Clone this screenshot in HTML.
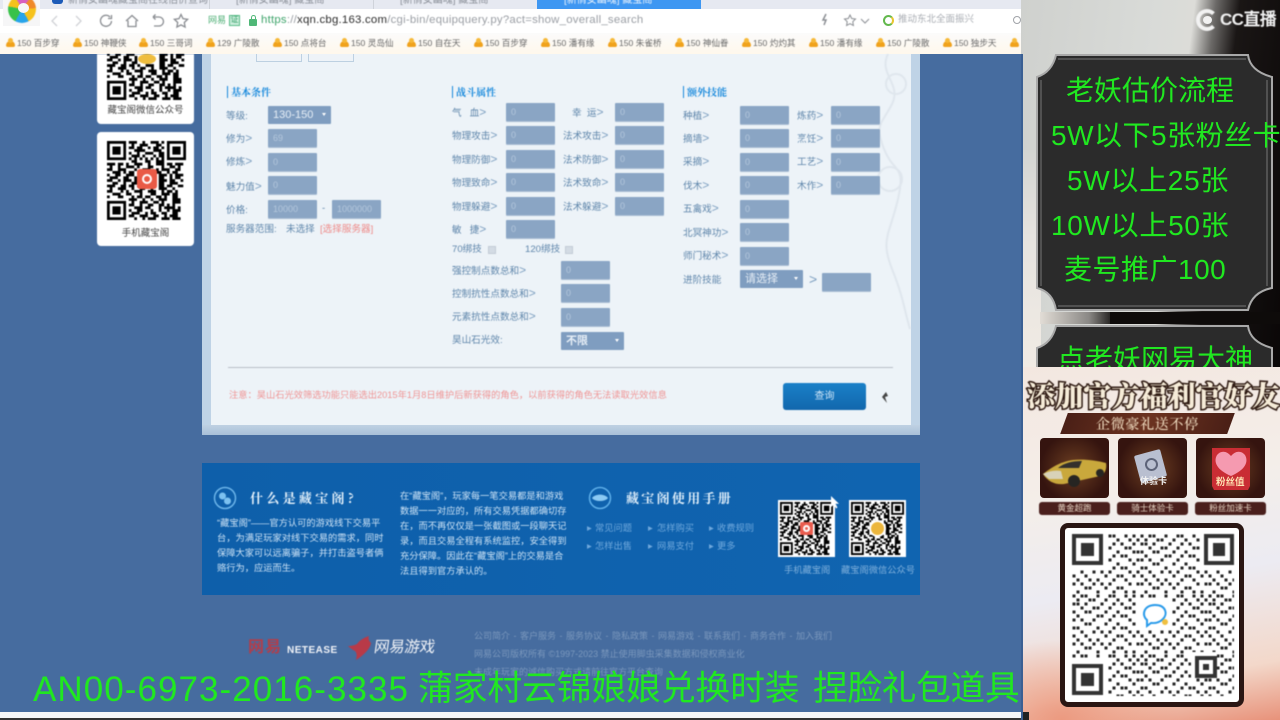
<!DOCTYPE html>
<html lang="zh"><head><meta charset="utf-8"><title>藏宝阁</title>
<style>
*{box-sizing:border-box;margin:0;padding:0}
html,body{width:1280px;height:720px;overflow:hidden;background:#466c9f;font-family:"Liberation Sans","Noto Sans CJK SC",sans-serif}
#stage{position:absolute;left:0;top:0;width:1280px;height:720px;overflow:hidden}
.t{position:absolute;white-space:nowrap;line-height:1}
.soft{filter:blur(.5px)}
.i{position:absolute;width:49px;height:18px;background:#8aa5c4;border-radius:1px;color:#b4c7dc;font-size:9px;line-height:18px;padding-left:5px;box-shadow:0 1px 0 #a9bdd3}
.s{position:absolute;width:63px;height:18px;background:#7f9dc0;border-radius:1px;color:#e6eef6;font-size:11px;line-height:18px;padding-left:5px}
.s:after{content:"";position:absolute;right:5px;top:7px;border:2.5px solid transparent;border-top:3px solid #fff}
.l{position:absolute;white-space:nowrap;font-size:9.6px;line-height:12px;color:#5f86ab}
.l b{font-weight:400;color:#7d9fc0;font-size:12px}
.h{position:absolute;white-space:nowrap;font:bold 10px/12px "Noto Serif CJK SC",serif;color:#1a8adc;border-left:1.5px solid #1a8adc;padding-left:3px}
.bm{position:absolute;top:38px;font-size:8.6px;line-height:11px;color:#6a6a6a;white-space:nowrap;padding-left:14px}
.bm:before{content:"";position:absolute;left:3px;top:3px;width:9px;height:6px;border-radius:5px 5px 2px 2px;background:#f0a21c}
.bm:after{content:"";position:absolute;left:5px;top:0;width:5px;height:5px;border-radius:50%;background:#f6b93a}
.f{position:absolute;white-space:nowrap;font-size:9.25px;line-height:18px;color:#cde3f6}
.m{position:absolute;white-space:nowrap;font-size:9.25px;line-height:11px;color:#6fa8dc}
.g{position:absolute;white-space:nowrap;color:#20e820;font-family:"Liberation Sans","Noto Sans CJK SC",sans-serif;line-height:1}
.card{position:absolute;top:438px;width:69px;height:60px;border-radius:4px;background:radial-gradient(circle at 50% 50%,#6d3f22,#35140f 75%)}
.cl{position:absolute;top:502px;width:71px;height:13px;border-radius:3px;background:#4a1f1c;color:#e6d3c2;font-size:8.5px;line-height:13px;text-align:center}
</style></head><body>
<div id="stage">
<svg width="0" height="0" style="position:absolute"><defs>
<symbol id="qr" viewBox="0 0 29 29">
<path fill-rule="evenodd" d="M0 0h7v7H0zM1 1v5h5V1zM2 2h3v3H2zM22 0h7v7h-7zM23 1v5h5V1zM24 2h3v3h-3zM0 22h7v7H0zM1 23v5h5v-5zM2 24h3v3H2z"/>
<path stroke="#000" fill="none" d="M8 .5h3m2 0h1m2 0h3m1 0h1M9 1.5h1m2 0h3m3 0h2M8 2.5h2m1 0h2m2 0h1m1 0h2m1 0h1M10 3.5h4m3 0h3M8 4.5h1m2 0h1m2 0h3m2 0h2M9 5.5h3m1 0h1m3 0h1m1 0h2M8 6.5h1m1 0h1m1 0h1m1 0h1m1 0h1m1 0h1m1 0h1M9 7.5h2m3 0h2m2 0h3M0 8.5h3m1 0h2m1 0h1m2 0h3m2 0h1m2 0h3m1 0h2m1 0h3M1 9.5h1m2 0h1m2 0h3m1 0h1m3 0h2m3 0h1m2 0h2m1 0h1M0 10.5h2m2 0h3m3 0h1m2 0h3m2 0h1m1 0h3m2 0h2M2 11.5h3m1 0h1m1 0h2m2 0h1m3 0h1m1 0h2m2 0h1m1 0h2M0 12.5h1m2 0h2m2 0h3m9 0h3m1 0h1m1 0h3M1 13.5h3m2 0h2m2 0h1m8 0h2m2 0h1m1 0h2M0 14.5h2m2 0h1m1 0h3m1 0h1m8 0h3m1 0h2m2 0h1M2 15.5h2m2 0h1m2 0h2m8 0h2m2 0h3M0 16.5h3m2 0h2m1 0h2m1 0h1m2 0h3m2 0h2m1 0h2m2 0h2M1 17.5h1m2 0h3m2 0h1m2 0h2m2 0h1m2 0h3m2 0h1M0 18.5h2m3 0h1m1 0h1m2 0h3m2 0h3m2 0h1m1 0h2m1 0h1M2 19.5h3m2 0h2m3 0h1m3 0h2m2 0h3m1 0h2M0 20.5h1m3 0h2m3 0h1m1 0h2m1 0h2m2 0h2m1 0h1m2 0h2M8 21.5h3m2 0h1m2 0h1m2 0h3m2 0h3M9 22.5h1m2 0h3m2 0h2m1 0h1m3 0h3M8 23.5h2m2 0h1m2 0h2m2 0h2m1 0h1m1 0h1M10 24.5h3m1 0h2m3 0h1m1 0h4m1 0h1M8 25.5h1m2 0h2m3 0h1m2 0h1m2 0h1m1 0h3M9 26.5h3m2 0h1m1 0h2m2 0h2m2 0h2M8 27.5h2m2 0h3m2 0h2m2 0h1m1 0h3M10 28.5h1m2 0h1m1 0h3m2 0h3m1 0h3"/>
</symbol>
<pattern id="dots" width="68" height="60" patternUnits="userSpaceOnUse">
<path fill="#262626" stroke="#fff" stroke-width="1" d="M0 0h4v4H0zM8 0h4v4H8zM12 0h4v4h-4zM24 0h4v4h-4zM36 0h4v4h-4zM40 0h4v4h-4zM52 0h4v4h-4zM60 0h4v4h-4zM4 4h4v4H4zM16 4h4v4h-4zM20 4h4v4h-4zM32 4h4v4h-4zM44 4h4v4h-4zM56 4h4v4h-4zM64 4h4v4h-4zM0 8h4v4H0zM4 8h4v4H4zM12 8h4v4h-4zM28 8h4v4h-4zM40 8h4v4h-4zM48 8h4v4h-4zM60 8h4v4h-4zM8 12h4v4H8zM20 12h4v4h-4zM24 12h4v4h-4zM36 12h4v4h-4zM52 12h4v4h-4zM56 12h4v4h-4zM0 16h4v4H0zM12 16h4v4h-4zM16 16h4v4h-4zM32 16h4v4h-4zM44 16h4v4h-4zM60 16h4v4h-4zM64 16h4v4h-4zM4 20h4v4H4zM24 20h4v4h-4zM28 20h4v4h-4zM40 20h4v4h-4zM48 20h4v4h-4zM52 20h4v4h-4zM0 24h4v4H0zM8 24h4v4H8zM20 24h4v4h-4zM36 24h4v4h-4zM56 24h4v4h-4zM64 24h4v4h-4zM12 28h4v4h-4zM16 28h4v4h-4zM32 28h4v4h-4zM44 28h4v4h-4zM60 28h4v4h-4zM0 32h4v4H0zM4 32h4v4H4zM24 32h4v4h-4zM40 32h4v4h-4zM48 32h4v4h-4zM52 32h4v4h-4zM8 36h4v4H8zM20 36h4v4h-4zM28 36h4v4h-4zM36 36h4v4h-4zM56 36h4v4h-4zM64 36h4v4h-4zM0 40h4v4H0zM12 40h4v4h-4zM32 40h4v4h-4zM44 40h4v4h-4zM48 40h4v4h-4zM60 40h4v4h-4zM4 44h4v4H4zM16 44h4v4h-4zM24 44h4v4h-4zM40 44h4v4h-4zM52 44h4v4h-4zM0 48h4v4H0zM8 48h4v4H8zM20 48h4v4h-4zM28 48h4v4h-4zM36 48h4v4h-4zM56 48h4v4h-4zM64 48h4v4h-4zM12 52h4v4h-4zM16 52h4v4h-4zM32 52h4v4h-4zM44 52h4v4h-4zM48 52h4v4h-4zM4 56h4v4H4zM24 56h4v4h-4zM40 56h4v4h-4zM52 56h4v4h-4zM60 56h4v4h-4z"/>
</pattern>
</defs></svg>

<!-- Browser chrome -->
<div style="position:absolute;left:0;top:0;width:1021px;height:9px;background:#e6e9f1"></div>
<div style="position:absolute;left:537px;top:0;width:164px;height:9px;background:#3e97f2"></div>
<div style="position:absolute;left:209px;top:0;width:1px;height:9px;background:#cfd3da"></div>
<div style="position:absolute;left:373px;top:0;width:1px;height:9px;background:#cfd3da"></div>
<div class="t soft" style="left:68px;top:-4px;font-size:10px;color:#8a8f98">新倩女幽魂藏宝阁在线估价查询</div>
<div class="t soft" style="left:236px;top:-4px;font-size:10px;color:#8a8f98">[新倩女幽魂] 藏宝阁</div>
<div class="t soft" style="left:400px;top:-4px;font-size:10px;color:#8a8f98">[新倩女幽魂] 藏宝阁</div>
<div class="t soft" style="left:564px;top:-4px;font-size:10px;color:#e8f2fd">[新倩女幽魂] 藏宝阁</div>
<div style="position:absolute;left:52px;top:0;width:11px;height:4px;background:#1c5bb8;border-radius:0 0 3px 3px"></div>
<div style="position:absolute;left:0;top:9px;width:1021px;height:24px;background:#fff"></div>
<div style="position:absolute;left:0;top:33px;width:1021px;height:21px;background:linear-gradient(#fbfbfb,#fff8ec)"></div>
<div style="position:absolute;left:3px;top:0;width:37px;height:26px;background:#f6f6f7"></div>
<div class="soft" style="position:absolute;left:8px;top:-5px;width:28px;height:28px;border-radius:50%;background:conic-gradient(#d85fc0 0 10%,#f08a2a 10% 24%,#f6c21c 24% 42%,#27a4ea 42% 58%,#38c24a 58% 78%,#f6c21c 78% 92%,#d85fc0 92%)"></div>
<div style="position:absolute;left:18px;top:3px;width:11px;height:10px;border-radius:50%;background:#f6f6f8"></div>

<svg class="soft" style="position:absolute;left:48px;top:11px" width="150" height="20" fill="none" stroke="#8a8d92" stroke-width="1.3">
<path d="M9 5l-5 5 5 5M28 5l5 5-5 5" stroke="#d0d2d6"/>
<path d="M62 6a5.5 5.5 0 1 0 1.500 4M63.500 4v3.500h-3.500"/>
<path d="M78 10l6-5.500 6 5.500M80 9.500v6h8v-6"/>
<path d="M105 6h6a4 4 0 0 1 0 9h-5M105 6l2.500-2.500M105 6l2.500 2.500"/>
<path d="M133 3.500l2 4.200 4.600.6-3.300 3.200.8 4.600-4.100-2.200-4.100 2.200.8-4.600-3.300-3.200 4.600-.6z"/>
</svg>
<div class="t soft" style="left:208px;top:16px;font-size:9px;color:#4cae74">网易</div>
<div class="t soft" style="left:229px;top:15px;width:11px;height:11px;background:#cdeedd;border:1px solid #58bb86;font-size:8px;color:#3aa36c;text-align:center">证</div>
<div style="position:absolute;left:249px;top:19px;width:8px;height:7px;background:#4fb777;border-radius:1px"></div>
<div style="position:absolute;left:250.500px;top:15px;width:5px;height:6px;border:1px solid #4fb777;border-bottom:0;border-radius:3px 3px 0 0"></div>
<div class="t soft" style="left:261px;top:15px;font-size:11.400px;letter-spacing:.02em;color:#9a9ea4;white-space:nowrap"><span style="color:#3fa46b">https</span>://<span style="color:#2c2c2c">xqn.cbg.163.com</span>/cgi-bin/equipquery.py?act=show_overall_search</div>
<svg class="soft" style="position:absolute;left:815px;top:12px" width="60" height="16" fill="none" stroke="#8c8f94"><path d="M11 2l-3 6h3l-2 5" stroke-width="1.500"/><path d="M35 3l1.700 3.500 3.800.5-2.700 2.700.6 3.800-3.400-1.800-3.400 1.800.6-3.800L29.500 7l3.800-.5z"/><path d="M46 7l4 4 4-4"/></svg>
<div style="position:absolute;left:883px;top:15px;width:11px;height:11px;border-radius:50%;border:2px solid #62b84c;border-right-color:#e8c62e"></div>
<div class="t soft" style="left:898px;top:15px;font-size:9.500px;color:#a9adb3">推动东北全面振兴</div>
<div style="position:absolute;left:1013px;top:16px;width:8px;height:8px;border-radius:50%;border:1px solid #a0a3a8"></div>

<div class="soft">
<span class="bm" style="left:3px">150 百步穿</span><span class="bm" style="left:70px">150 神鞭侠</span><span class="bm" style="left:136px">150 三哥词</span><span class="bm" style="left:203px">129 广陵散</span><span class="bm" style="left:270px">150 点将台</span><span class="bm" style="left:337px">150 灵岛仙</span><span class="bm" style="left:404px">150 自在天</span><span class="bm" style="left:471px">150 百步穿</span><span class="bm" style="left:538px">150 潘有缘</span><span class="bm" style="left:605px">150 朱雀桥</span><span class="bm" style="left:672px">150 神仙眷</span><span class="bm" style="left:739px">150 灼灼其</span><span class="bm" style="left:806px">150 潘有缘</span><span class="bm" style="left:873px">150 广陵散</span><span class="bm" style="left:940px">150 独步天</span><span class="bm" style="left:1007px;width:14px;overflow:hidden">1</span>
</div>

<!-- page -->
<div style="position:absolute;left:0;top:54px;width:1021px;height:658px;background:#466c9f"></div>
<div style="position:absolute;left:0;top:712px;width:1021px;height:6px;background:#f6f7f8"></div>
<div style="position:absolute;left:0;top:718px;width:1021px;height:2px;background:#333"></div>

<!-- left QR cards -->
<div style="position:absolute;left:97px;top:54px;width:97px;height:70px;background:#fff;border-radius:0 0 4px 4px;overflow:hidden" class="soft">
<svg style="position:absolute;left:10px;top:-34px" width="80" height="80"><use href="#qr"/></svg>
<div style="position:absolute;left:41px;top:0;width:18px;height:10px;border-radius:50%;background:#efbd3e"></div>
<div class="t" style="left:0;width:97px;text-align:center;top:52px;font-size:9.500px;color:#444">藏宝阁微信公众号</div>
</div>
<div style="position:absolute;left:97px;top:132px;width:97px;height:114px;background:#fff;border-radius:4px" class="soft">
<svg style="position:absolute;left:10px;top:9px" width="79" height="79"><use href="#qr"/></svg>
<div style="position:absolute;left:40px;top:37px;width:20px;height:20px;border-radius:3px;background:#e95a46"></div>
<div style="position:absolute;left:45px;top:42px;width:10px;height:10px;border-radius:50%;border:2.500px solid #fff"></div>
<div class="t" style="left:0;width:97px;text-align:center;top:97px;font-size:9.500px;color:#444">手机藏宝阁</div>
</div>

<!-- form panel -->
<div style="position:absolute;left:202px;top:54px;width:718px;height:381px;background:#bfd3e6"></div>
<div style="position:absolute;left:202px;top:425px;width:718px;height:10px;background:linear-gradient(#bfd1e3,#a8c0d8)"></div>
<div style="position:absolute;left:211px;top:54px;width:700px;height:371px;background:#edf3f8"></div>
<svg class="soft" style="position:absolute;left:860px;top:54px" width="51" height="290" fill="none" stroke="#dfe6ed" stroke-width="2"><path d="M28 0c-10 20 14 30 4 50s-18 20-8 45 22 15 14 50-18 40-6 70 12 40 18 60"/><circle cx="36" cy="30" r="10"/><circle cx="30" cy="125" r="12"/></svg>
<div style="position:absolute;left:256px;top:54px;width:46px;height:8px;border:1px solid #bdd0e1;border-top:0;background:#eef3f8"></div>
<div style="position:absolute;left:308px;top:54px;width:46px;height:8px;border:1px solid #bdd0e1;border-top:0;background:#eef3f8"></div>

<div class="soft">
<div class="h" style="left:227px;top:86px">基本条件</div>
<div class="h" style="left:452px;top:86px">战斗属性</div>
<div class="h" style="left:683px;top:86px">额外技能</div>

<div class="l" style="left:226px;top:111px">等级:</div><div class="s" style="left:268px;top:106px">130-150</div>
<div class="l" style="left:226px;top:132px">修为<b>&gt;</b></div><div class="i" style="left:268px;top:129px">69</div>
<div class="l" style="left:226px;top:155px">修炼<b>&gt;</b></div><div class="i" style="left:268px;top:153px">0</div>
<div class="l" style="left:226px;top:180px">魅力值<b>&gt;</b></div><div class="i" style="left:268px;top:176px">0</div>
<div class="l" style="left:226px;top:205px">价格:</div><div class="i" style="left:268px;top:200px">10000</div>
<div class="l" style="left:322px;top:203px">-</div><div class="i" style="left:332px;top:200px">1000000</div>
<div class="l" style="left:226px;top:224px">服务器范围:</div><div class="l" style="left:286px;top:224px">未选择</div><div class="l" style="left:320px;top:224px;color:#ee8a88">[选择服务器]</div>

<div class="l" style="left:452px;top:106px">气&nbsp;&nbsp;&nbsp;血<b>&gt;</b></div><div class="i" style="left:506px;top:103px">0</div>
<div class="l" style="left:452px;top:129px">物理攻击<b>&gt;</b></div><div class="i" style="left:506px;top:126px">0</div>
<div class="l" style="left:452px;top:153px">物理防御<b>&gt;</b></div><div class="i" style="left:506px;top:150px">0</div>
<div class="l" style="left:452px;top:176px">物理致命<b>&gt;</b></div><div class="i" style="left:506px;top:173px">0</div>
<div class="l" style="left:452px;top:200px">物理躲避<b>&gt;</b></div><div class="i" style="left:506px;top:197px">0</div>
<div class="l" style="left:452px;top:223px">敏&nbsp;&nbsp;&nbsp;捷<b>&gt;</b></div><div class="i" style="left:506px;top:220px">0</div>
<div class="l" style="left:572px;top:106px">幸&nbsp;&nbsp;运<b>&gt;</b></div><div class="i" style="left:615px;top:103px">0</div>
<div class="l" style="left:563px;top:129px">法术攻击<b>&gt;</b></div><div class="i" style="left:615px;top:126px">0</div>
<div class="l" style="left:563px;top:153px">法术防御<b>&gt;</b></div><div class="i" style="left:615px;top:150px">0</div>
<div class="l" style="left:563px;top:176px">法术致命<b>&gt;</b></div><div class="i" style="left:615px;top:173px">0</div>
<div class="l" style="left:563px;top:200px">法术躲避<b>&gt;</b></div><div class="i" style="left:615px;top:197px">0</div>
<div class="l" style="left:452px;top:244px">70绑技</div><div style="position:absolute;left:488px;top:246px;width:8px;height:8px;background:#d3dbe4;border:1px solid #c3ccd6"></div>
<div class="l" style="left:525px;top:244px">120绑技</div><div style="position:absolute;left:565px;top:246px;width:8px;height:8px;background:#d3dbe4;border:1px solid #c3ccd6"></div>
<div class="l" style="left:452px;top:264px">强控制点数总和<b>&gt;</b></div><div class="i" style="left:561px;top:261px">0</div>
<div class="l" style="left:452px;top:287px">控制抗性点数总和<b>&gt;</b></div><div class="i" style="left:561px;top:284px">0</div>
<div class="l" style="left:452px;top:310px">元素抗性点数总和<b>&gt;</b></div><div class="i" style="left:561px;top:308px">0</div>
<div class="l" style="left:452px;top:335px">昊山石光效:</div><div class="s" style="left:561px;top:332px;font-weight:bold">不限</div>

<div class="l" style="left:683px;top:109px">种植<b>&gt;</b></div><div class="i" style="left:740px;top:106px">0</div>
<div class="l" style="left:683px;top:132px">摘墙<b>&gt;</b></div><div class="i" style="left:740px;top:129px">0</div>
<div class="l" style="left:683px;top:155px">采摘<b>&gt;</b></div><div class="i" style="left:740px;top:153px">0</div>
<div class="l" style="left:683px;top:179px">伐木<b>&gt;</b></div><div class="i" style="left:740px;top:176px">0</div>
<div class="l" style="left:683px;top:202px">五禽戏<b>&gt;</b></div><div class="i" style="left:740px;top:200px">0</div>
<div class="l" style="left:683px;top:226px">北冥神功<b>&gt;</b></div><div class="i" style="left:740px;top:223px">0</div>
<div class="l" style="left:683px;top:249px">师门秘术<b>&gt;</b></div><div class="i" style="left:740px;top:247px">0</div>
<div class="l" style="left:683px;top:275px">进阶技能</div><div class="s" style="left:740px;top:270px">请选择</div>
<div class="l" style="left:809px;top:273px"><b style="font-size:14px">&gt;</b></div><div class="i" style="left:822px;top:273px"></div>
<div class="l" style="left:797px;top:109px">炼药<b>&gt;</b></div><div class="i" style="left:831px;top:106px">0</div>
<div class="l" style="left:797px;top:132px">烹饪<b>&gt;</b></div><div class="i" style="left:831px;top:129px">0</div>
<div class="l" style="left:797px;top:155px">工艺<b>&gt;</b></div><div class="i" style="left:831px;top:153px">0</div>
<div class="l" style="left:797px;top:179px">木作<b>&gt;</b></div><div class="i" style="left:831px;top:176px">0</div>

<div style="position:absolute;left:228px;top:367px;width:665px;height:1px;background:#b8bfc7"></div>
<div class="t" style="left:229px;top:391px;font-size:9.250px;color:#ef9494">注意：昊山石光效筛选功能只能选出2015年1月8日维护后新获得的角色，以前获得的角色无法读取光效信息</div>
<div class="t" style="left:783px;top:383px;width:83px;height:27px;border-radius:3px;background:linear-gradient(#1a80c8,#1267ad);color:#cfe6f8;font-size:10px;line-height:27px;text-align:center">查询</div>
<svg style="position:absolute;left:880px;top:391px" width="10" height="14"><path d="M6 1L2 6l5 6-2-6 3-1z" fill="#444"/></svg>
</div>

<!-- blue footer panel -->
<div style="position:absolute;left:202px;top:463px;width:718px;height:132px;background:linear-gradient(90deg,#0e5faa,#1064b0)"></div>
<div class="soft">
<svg style="position:absolute;left:213px;top:486px" width="24" height="24" fill="none"><circle cx="12" cy="12" r="10.500" stroke="#6db5ea" stroke-width="1.500"/><circle cx="9.500" cy="10" r="3.500" fill="#7cc1f0"/><circle cx="14.500" cy="15" r="3.500" fill="#7cc1f0"/></svg>
<div class="t" style="left:250px;top:491px;font:bold 13px/1 'Noto Serif CJK SC',serif;letter-spacing:3.300px;color:#e6f2fb">什么是藏宝阁?</div>
<div class="f" style="left:217px;top:514px">“藏宝阁”——官方认可的游戏线下交易平</div>
<div class="f" style="left:217px;top:529px">台，为满足玩家对线下交易的需求，同时</div>
<div class="f" style="left:217px;top:544px">保障大家可以远离骗子，并打击盗号者俩</div>
<div class="f" style="left:217px;top:559px">赂行为，应运而生。</div>
<div class="f" style="left:400px;top:487px">在“藏宝阁”，玩家每一笔交易都是和游戏</div>
<div class="f" style="left:400px;top:502px">数据一一对应的，所有交易凭据都确切存</div>
<div class="f" style="left:400px;top:517px">在，而不再仅仅是一张截图或一段聊天记</div>
<div class="f" style="left:400px;top:532px">录，而且交易全程有系统监控，安全得到</div>
<div class="f" style="left:400px;top:547px">充分保障。因此在“藏宝阁”上的交易是合</div>
<div class="f" style="left:400px;top:562px">法且得到官方承认的。</div>
<svg style="position:absolute;left:588px;top:486px" width="24" height="24" fill="none"><circle cx="12" cy="12" r="10.500" stroke="#5fb0ea" stroke-width="1.500"/><path d="M4 12c3-4.500 13-4.500 16 0-3 4-13 4-16 0z" fill="#8ccaf4"/></svg>
<div class="t" style="left:626px;top:491px;font:bold 13px/1 'Noto Serif CJK SC',serif;letter-spacing:2.300px;color:#e2f0fb">藏宝阁使用手册</div>
<div class="m" style="left:587px;top:523px">▸</div><div class="m" style="left:595px;top:523px">常见问题</div><div class="m" style="left:648px;top:523px">▸</div><div class="m" style="left:657px;top:523px">怎样购买</div><div class="m" style="left:709px;top:523px">▸</div><div class="m" style="left:717px;top:523px">收费规则</div>
<div class="m" style="left:587px;top:541px">▸</div><div class="m" style="left:595px;top:541px">怎样出售</div><div class="m" style="left:648px;top:541px">▸</div><div class="m" style="left:657px;top:541px">网易支付</div><div class="m" style="left:709px;top:541px">▸</div><div class="m" style="left:717px;top:541px">更多</div>
<div style="position:absolute;left:778px;top:500px;width:57px;height:57px;background:#fff"></div>
<svg style="position:absolute;left:780px;top:502px" width="53" height="53"><use href="#qr"/></svg>
<div style="position:absolute;left:800px;top:522px;width:13px;height:13px;background:#ea5c4e;border-radius:2px"></div>
<div style="position:absolute;left:803px;top:525px;width:7px;height:7px;border-radius:50%;border:2px solid #fff"></div>
<div style="position:absolute;left:849px;top:500px;width:57px;height:57px;background:#fff"></div>
<svg style="position:absolute;left:851px;top:502px" width="53" height="53"><use href="#qr"/></svg>
<div style="position:absolute;left:871px;top:522px;width:13px;height:13px;background:#ecb63c;border-radius:50%;box-shadow:0 0 0 2px #fff"></div>
<svg style="position:absolute;left:830px;top:495px" width="10" height="16"><path d="M1 1v11l3-2.500 2 4 1.500-1-2-3.800H9z" fill="#fff"/></svg>
<div class="m" style="left:784px;top:565px;color:#7fb0dc">手机藏宝阁</div><div class="m" style="left:841px;top:565px;color:#7fb0dc">藏宝阁微信公众号</div>
</div>

<!-- logos and copyright -->
<div class="soft">
<div class="t" style="left:248px;top:640px;font-size:16px;font-weight:bold;color:#b33d4a;letter-spacing:1px">网易</div>
<div class="t" style="left:287px;top:646px;font:bold 10px/1 'Liberation Sans',sans-serif;letter-spacing:.5px;color:#f2f4f8">NETEASE</div>
<svg style="position:absolute;left:346px;top:635px" width="30" height="26"><path d="M2 11c4 0 7-1 9-2 2-3 6-6 12-8-1 3 0 5 2 7-1 6-7 12-15 17 1-4 1-7-1-9-2-1-5-3-7-5z" fill="#b83a48"/></svg>
<div class="t" style="left:374px;top:640px;font-size:15.500px;color:#f2f4f8;transform:skewX(-8deg);letter-spacing:-.3px">网易游戏</div>
<div class="t" style="left:474px;top:632px;font-size:9px;color:#7b98bd;word-spacing:1px">公司简介 - 客户服务 - 服务协议 - 隐私政策 - 网易游戏 - 联系我们 - 商务合作 - 加入我们</div>
<div class="t" style="left:474px;top:650px;font-size:9px;color:#7b98bd">网易公司版权所有 ©1997-2023 禁止使用脚虫采集数据和侵权商业化</div>
<div class="t" style="left:474px;top:668px;font-size:9px;color:#7b98bd">未成年玩家的诚信购买方式请前往官方平台查询</div>
</div>

<div class="g" style="left:33px;top:672px;font-size:35px;letter-spacing:1.050px">AN00-6973-2016-3335</div>
<div class="g" style="left:418px;top:672px;font-size:34.700px">蒲家村云锦娘娘兑换时装</div>
<div class="g" style="left:813px;top:672px;font-size:34.700px;letter-spacing:-.3px">捏脸礼包道具</div>

<!-- right column -->
<div style="position:absolute;left:1021px;top:0;width:2px;height:54px;background:#cfd1ce"></div>
<div style="position:absolute;left:1021px;top:54px;width:2px;height:666px;background:#3a5f93"></div>
<div style="position:absolute;left:1023px;top:0;width:257px;height:367px;background:linear-gradient(97deg,#cfd1ce 0,#d9dbd8 45%,#dcdcd8 57%,#6c6a68 64%,#1a1615 72%,#0a0707 100%)"></div>
<div style="position:absolute;left:1023px;top:150px;width:18px;height:217px;background:linear-gradient(#d4d5d2,#e5e3df 40%,#f1ebe4)"></div>
<div style="position:absolute;left:1040px;top:312px;width:70px;height:12px;background:linear-gradient(90deg,#e2ddd6,#8a8885 70%,#2a2826)"></div>
<div style="position:absolute;left:1110px;top:312px;width:170px;height:12px;background:#0e0b0a"></div>
<div class="soft" style="position:absolute;left:1196px;top:9px;width:22px;height:22px;border-radius:50%;border:4px solid #f2f2f2;border-right-color:transparent"></div>
<div style="position:absolute;left:1203px;top:16px;width:9px;height:8px;border-radius:50%;background:#f2f2f2"></div>
<div class="t soft" style="left:1220px;top:11px;font-size:17px;font-weight:bold;color:#f1f1f1;letter-spacing:-.6px">CC直播</div>
<svg style="position:absolute;left:1034px;top:52px" width="240" height="262" fill="#2b2b2b" stroke="#a9a9a9" stroke-width="2"><path d="M22 3H214q2 16 24 22V236q-20 4-24 22H22q-3-18-19-22V25Q18 20 22 3z"/><path d="M24 7H212M7 28V234M233 28V234M24 254H212" fill="none" stroke="#777" stroke-width="1"/></svg>
<svg style="position:absolute;left:1034px;top:323px" width="240" height="45" fill="#2b2b2b" stroke="#a9a9a9" stroke-width="2"><path d="M22 3H214q2 16 24 22V60H3V25Q18 20 22 3z"/></svg>
<div class="g" style="left:1066px;top:77px;font-size:28px">老妖估价流程</div>
<div class="g" style="left:1051px;top:122px;font-size:28px;letter-spacing:.5px;width:229px;overflow:hidden">5W以下5张粉丝卡</div>
<div class="g" style="left:1067px;top:167px;font-size:28px;letter-spacing:.7px">5W以上25张</div>
<div class="g" style="left:1051px;top:212px;font-size:28px;letter-spacing:.7px">10W以上50张</div>
<div class="g" style="left:1064px;top:256px;font-size:28px;letter-spacing:.5px">麦号推广100</div>
<div class="g" style="left:1057px;top:346px;font-size:28px">点老妖网易大神</div>

<!-- promo -->
<div style="position:absolute;left:1023px;top:367px;width:257px;height:353px;background:radial-gradient(ellipse 120px 80px at 15% 100%,#ec9a80,transparent),linear-gradient(170deg,#f3e7e0 0,#f4eee9 35%,#ecebf2 60%,#f3d8ca 85%,#e8927a 100%)"></div>
<div class="t soft" style="left:1027px;top:381px;font:900 28.100px/1 'Noto Serif CJK SC',serif;color:#f6ecd8;-webkit-text-stroke:3px #2e1a12;paint-order:stroke fill;white-space:nowrap">添加官方福利官好友</div>
<div style="position:absolute;left:1064px;top:413px;width:167px;height:21px;background:linear-gradient(90deg,#4a1f16,#6c3320 50%,#4a1f16);transform:skewX(-20deg)"></div>
<div class="t soft" style="left:1096px;top:417px;font:500 14px/1 'Noto Serif CJK SC',serif;color:#f0dcc0;letter-spacing:.700px">企微豪礼送不停</div>
<div class="card" style="left:1040px"></div><div class="card" style="left:1118px"></div><div class="card" style="left:1196px"></div>
<svg class="soft" style="position:absolute;left:1040px;top:438px" width="69" height="60"><path d="M3 36c8-6 16-12 30-14 10-1 22 0 33 3 1 6-1 11-6 13l-36 8c-8 1-16-2-21-10z" fill="#c9a83c"/><path d="M18 30c6-5 14-7 24-7l-3 7z" fill="#33302c"/><path d="M3 36c6-3 12-4 18-3l2 8-14 0z" fill="#d8d2b8"/><circle cx="34" cy="43" r="6" fill="#262522"/><circle cx="60" cy="35" r="4" fill="#262522"/></svg>
<div style="position:absolute;left:1137px;top:452px;width:27px;height:28px;background:#b9bfd0;transform:rotate(-15deg);border-radius:2px"></div>
<div style="position:absolute;left:1145px;top:458px;width:13px;height:13px;border-radius:50%;border:2px solid #5d6378;transform:rotate(-15deg)"></div>
<div class="t" style="left:1140px;top:477px;font-size:9px;font-weight:bold;color:#f2f2f2">体验卡</div>
<svg style="position:absolute;left:1209px;top:446px" width="44" height="46"><path d="M3 2h38v38l-2 4H5l-2-4z" fill="#c92d34"/><path d="M22 30C8 24 4 16 8 9c4-5 10-4 14 1 4-5 10-6 14-1 4 7 0 15-14 21z" fill="#f59ab0"/></svg>
<div class="t" style="left:1216px;top:478px;font-size:9.500px;font-weight:bold;color:#ffe4b3">粉丝值</div>
<div class="cl soft" style="left:1039px">黄金超跑</div><div class="cl soft" style="left:1117px">骑士体验卡</div><div class="cl soft" style="left:1195px">粉丝加速卡</div>

<div style="position:absolute;left:1060px;top:523px;width:184px;height:184px;background:#fff;border:5px solid #2a1613;border-radius:8px"></div>
<svg style="position:absolute;left:1072px;top:534px" width="162" height="162" class="soft">
<rect x="36" y="0" width="92" height="162" fill="url(#dots)"/><rect x="0" y="36" width="162" height="88" fill="url(#dots)"/><rect x="128" y="124" width="34" height="38" fill="url(#dots)"/>
<path fill="#333" fill-rule="evenodd" d="M0 0h31v31H0zM4 4v23h23V4zM9 9h13v13H9zM132 0h30v31h-30zM136 4v23h22V4zM141 9h12v13h-12zM0 130h31v31H0zM4 134v23h23v-23zM9 139h13v13H9z"/>
<rect x="119" y="118" width="26" height="26" fill="#fff"/>
<path fill="#333" fill-rule="evenodd" d="M123 122h22v22h-22zM127 126v14h14v-14zM131 130h6v6h-6z"/>
<rect x="64" y="64" width="36" height="32" fill="#fff"/>
<path d="M75 86c-6-5-3-15 8-15 11 0 13 9 8 14s-10 4-12 4l-4 3z" fill="none" stroke="#2a9bea" stroke-width="2"/>
<circle cx="93" cy="88" r="3" fill="#f0c040"/>
</svg>
<div style="position:absolute;left:1023px;top:712px;width:6px;height:8px;background:#222"></div>
</div>
</body></html>
